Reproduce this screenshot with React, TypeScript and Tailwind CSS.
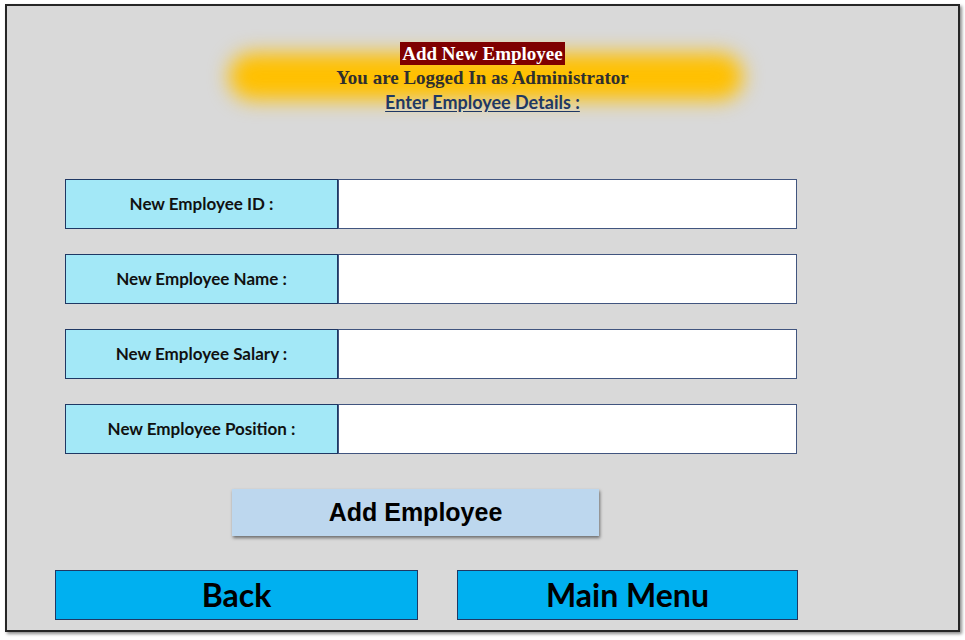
import React from 'react';

const fields = [
  'New Employee ID :',
  'New Employee Name :',
  'New Employee Salary :',
  'New Employee Position :',
];

function FieldRow({ label, first }: { label: string; first?: boolean }) {
  return (
    <div className={`flex h-[50px] ${first ? '' : 'mt-[25px]'}`}>
      <div className="w-[273px] h-full flex items-center justify-center bg-[#a3e8f7] border border-[#1f3864] text-[17px] font-bold text-[#111] font-['Lato',sans-serif]">
        {label}
      </div>
      <input
        type="text"
        className="w-[459px] h-full bg-white border border-[#41557f] outline-none px-2"
      />
    </div>
  );
}

export default function App() {
  return (
    <div className="w-[965px] h-[640px] bg-white pt-[4px] pl-[5px]">
      <div className="w-[955px] h-[628px] bg-[#d9d9d9] border-2 border-[#262626] shadow-[2px_2px_3px_rgba(0,0,0,0.45)] flex flex-col">
        <div className="relative mt-[36px] flex flex-col items-center">
          <div className="absolute top-[11px] left-[222px] w-[514px] h-[47px] rounded-full bg-[#ffc000] blur-[10px]" />
          <div className="relative bg-[#7f0000] text-white px-[2px] h-[23px] leading-[23px] text-[19px] font-bold font-['Liberation_Serif',serif]">
            Add New Employee
          </div>
          <div className="relative text-[#2f2f2f] text-[19px] leading-[25px] font-bold font-['Liberation_Serif',serif]">
            You are Logged In as Administrator
          </div>
          <div className="relative mt-[1px] text-[#1f3864] text-[18px] leading-[22px] font-bold underline underline-offset-2 font-['Lato',sans-serif]">
            Enter Employee Details :
          </div>
        </div>

        <div className="mt-[66px] ml-[58px] flex flex-col">
          {fields.map((f, i) => (
            <FieldRow key={f} label={f} first={i === 0} />
          ))}
        </div>

        <button className="mt-[35px] ml-[225px] w-[367px] h-[47px] bg-[#bdd7ee] shadow-[1px_2px_3px_rgba(0,0,0,0.5)] text-[25px] font-bold text-black font-['Liberation_Sans',sans-serif]">
          Add Employee
        </button>

        <div className="mt-[34px] ml-[48px] flex gap-[39px]">
          <button className="w-[363px] h-[50px] bg-[#00b0f0] border border-[#1f3864] text-[32px] font-bold text-black font-['Lato',sans-serif]">
            Back
          </button>
          <button className="w-[341px] h-[50px] bg-[#00b0f0] border border-[#1f3864] text-[32px] font-bold text-black font-['Lato',sans-serif]">
            Main Menu
          </button>
        </div>
      </div>
    </div>
  );
}
